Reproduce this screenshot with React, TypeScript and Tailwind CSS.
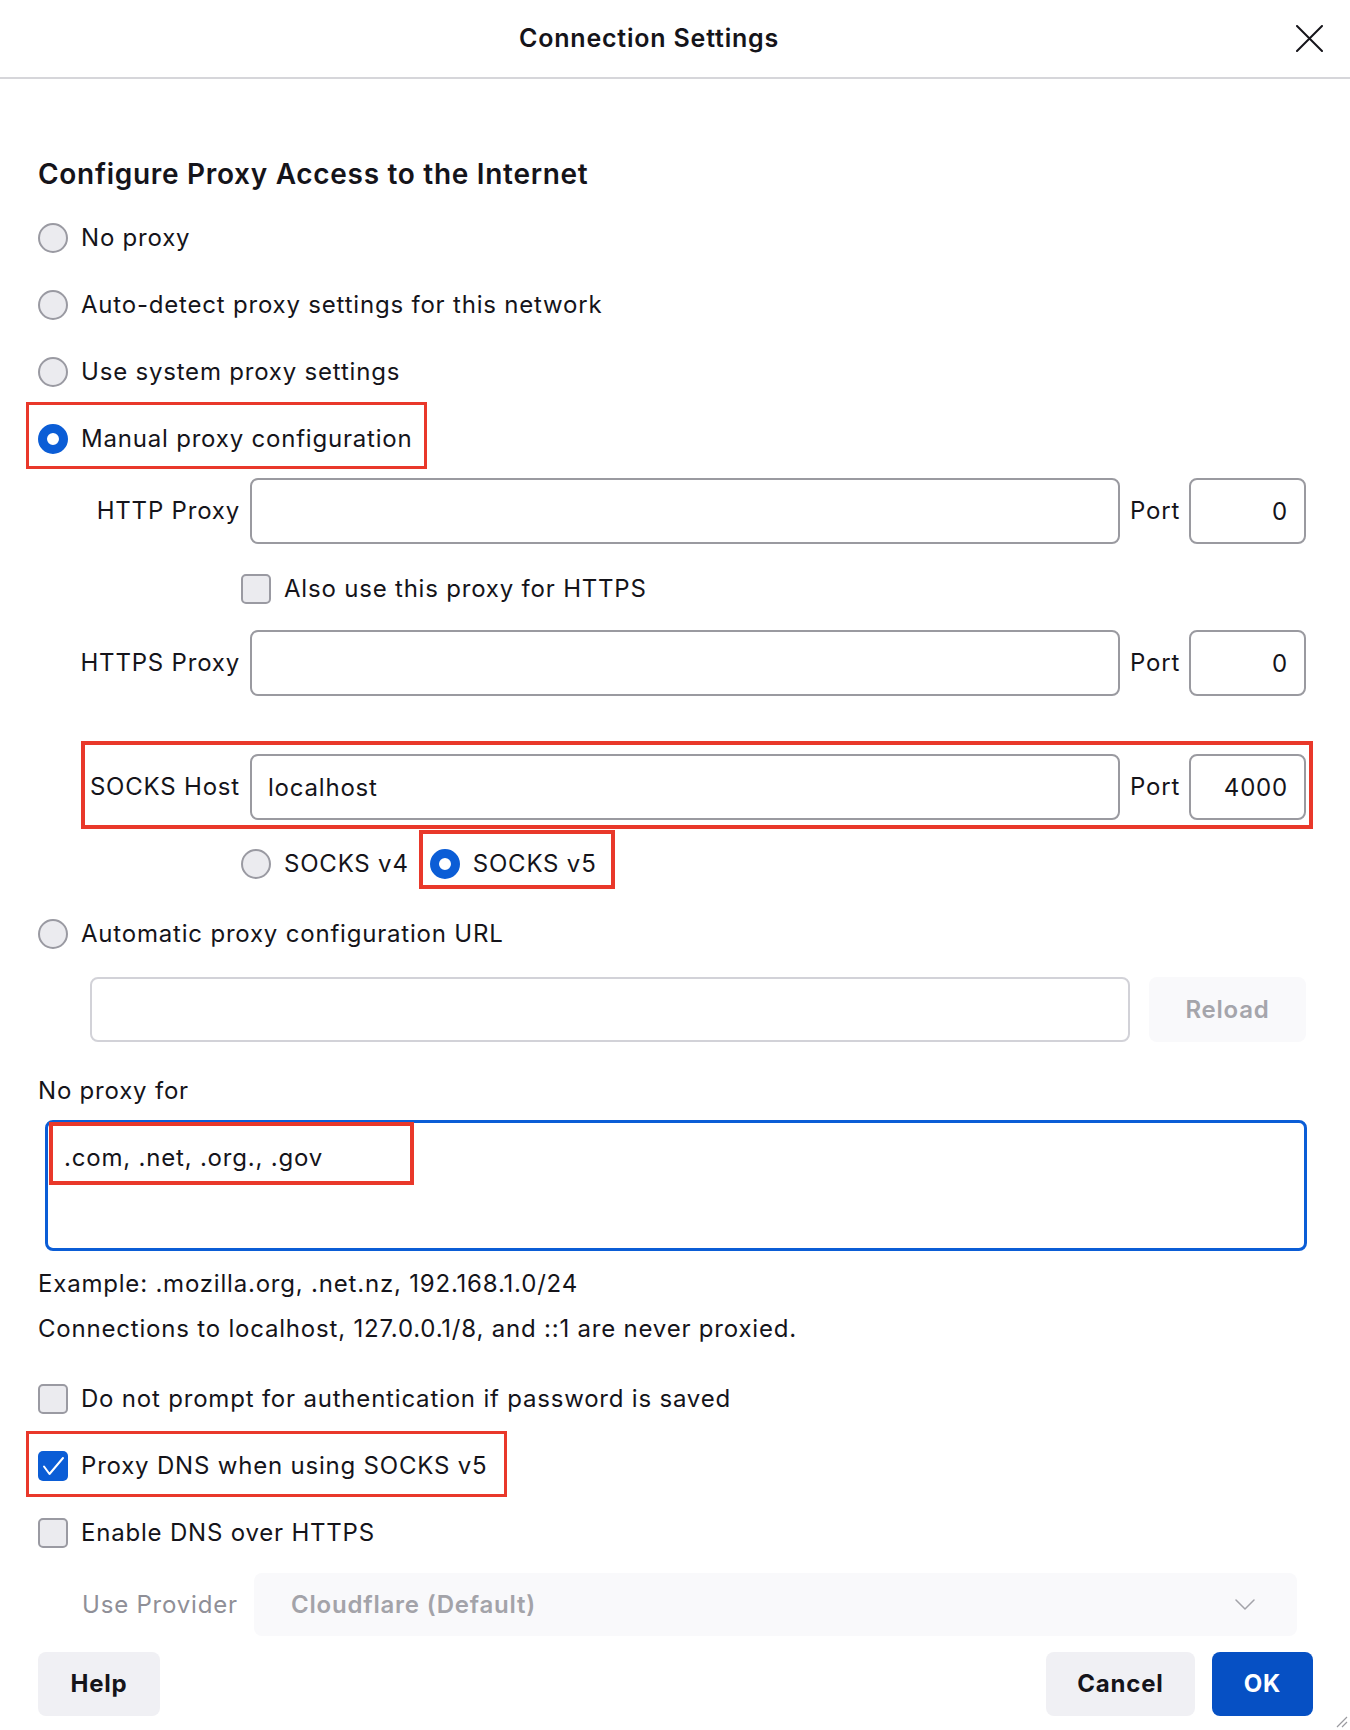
import { useState } from "react";

function Radio({ checked = false }: { checked?: boolean }) {
  if (checked) {
    return <span className="block w-[30px] h-[30px] rounded-full border-[9px] border-[#0b5dd6] bg-white shrink-0" />;
  }
  return <span className="block w-[30px] h-[30px] rounded-full border-2 border-[#9a9aa2] bg-[#ebebef] shrink-0" />;
}

function Checkbox({ checked = false }: { checked?: boolean }) {
  if (checked) {
    return (
      <span className="flex items-center justify-center w-[30px] h-[30px] rounded-[5px] bg-[#0b5dd6] shrink-0">
        <svg width="30" height="30" viewBox="0 0 30 30" fill="none">
          <path d="M6 15.5 L11.5 23 L25 7" stroke="white" strokeWidth="2" strokeLinecap="round" strokeLinejoin="round" />
        </svg>
      </span>
    );
  }
  return <span className="block w-[30px] h-[30px] rounded-[5px] border-2 border-[#9a9aa2] bg-[#ebebef] shrink-0" />;
}

function RadioRow({ label, checked }: { label: string; checked?: boolean }) {
  return (
    <div className="h-[67px] flex items-center gap-[13px]">
      <Radio checked={checked} />
      <span>{label}</span>
    </div>
  );
}

function CheckRow({ label, checked }: { label: string; checked?: boolean }) {
  return (
    <div className="h-[67px] flex items-center gap-[13px]">
      <Checkbox checked={checked} />
      <span>{label}</span>
    </div>
  );
}

function ProxyRow({ label, host = "", port }: { label: string; host?: string; port: string }) {
  return (
    <div className="h-[66px] flex items-center">
      <span className="w-[212px] text-right pr-[10px] shrink-0 whitespace-nowrap">{label}</span>
      <input
        readOnly
        value={host}
        className="w-[870px] h-full rounded-[8px] border-2 border-[#9a9aa0] bg-white px-[16px] outline-none"
      />
      <span className="ml-[10px]">Port</span>
      <input
        readOnly
        value={port}
        className="ml-auto w-[117px] h-full rounded-[8px] border-2 border-[#9a9aa0] bg-white px-[16px] text-right outline-none"
      />
    </div>
  );
}

export default function App() {
  const [noProxy] = useState(".com, .net, .org., .gov");

  return (
    <div className="relative w-[1350px] h-[1730px] bg-white text-[#15141a] font-[family-name:Inter,sans-serif] text-[24px] tracking-[0.8px] overflow-hidden">
      <header className="relative h-[79px] border-b-2 border-[#d6d6da] flex items-center justify-center pr-[52px]">
        <h1 className="text-[25px] tracking-[0.8px] font-semibold">Connection Settings</h1>
        <button className="absolute right-[27px] top-[25px] w-[27px] h-[27px]">
          <svg width="27" height="27" viewBox="0 0 27 27" fill="none">
            <path d="M1 1 L26 26 M26 1 L1 26" stroke="#15141a" strokeWidth="2" strokeLinecap="round" />
          </svg>
        </button>
      </header>

      <main className="ml-[38px] w-[1268px]">
        <h2 className="mt-[75px] h-[40px] flex items-center text-[28px] tracking-[0.7px] font-semibold">
          Configure Proxy Access to the Internet
        </h2>

        <div className="mt-[10px]">
          <RadioRow label="No proxy" />
          <RadioRow label="Auto-detect proxy settings for this network" />
          <RadioRow label="Use system proxy settings" />
          <div className="relative">
            <RadioRow label="Manual proxy configuration" checked />
            <div className="absolute left-[-12px] top-[-3px] w-[401px] h-[67px] border-[3px] border-[#e9382a]" />
          </div>
        </div>

        <div className="mt-[6px]">
          <ProxyRow label="HTTP Proxy" port="0" />
        </div>

        <div className="mt-[12px] h-[65px] pl-[203px] flex items-center gap-[13px]">
          <Checkbox />
          <span>Also use this proxy for HTTPS</span>
        </div>

        <div className="mt-[9px]">
          <ProxyRow label="HTTPS Proxy" port="0" />
        </div>

        <div className="relative mt-[58px]">
          <ProxyRow label="SOCKS Host" host="localhost" port="4000" />
          <div className="absolute left-[43px] top-[-13px] w-[1232px] h-[88px] border-[4px] border-[#e9382a]" />
        </div>

        <div className="relative mt-[11px] h-[65px] pl-[203px] flex items-center">
          <Radio />
          <span className="ml-[13px]">SOCKS v4</span>
          <span className="ml-[21px]">
            <Radio checked />
          </span>
          <span className="ml-[13px]">SOCKS v5</span>
          <div className="absolute left-[381px] top-[-1px] w-[196px] h-[59px] border-[4px] border-[#e9382a]" />
        </div>

        <div className="mt-[4px]">
          <RadioRow label="Automatic proxy configuration URL" />
        </div>

        <div className="mt-[10px] h-[65px] pl-[52px] flex">
          <input
            readOnly
            value=""
            className="w-[1040px] h-full rounded-[8px] border-2 border-[#d2d2d8] bg-white px-[16px] outline-none"
          />
          <button className="ml-auto w-[157px] h-full rounded-[8px] bg-[#f9f9fb] text-[#a5a5ab] font-semibold">
            Reload
          </button>
        </div>

        <div className="mt-[28px] h-[42px] flex items-center">No proxy for</div>

        <div className="relative mt-[8px] ml-[7px] w-[1262px] h-[131px]">
          <textarea
            readOnly
            value={noProxy}
            className="w-full h-full rounded-[8px] border-[3px] border-[#0b5dd6] px-[16px] pt-[19px] leading-[32px] resize-none outline-none"
          />
          <div className="absolute left-[4px] top-[2px] w-[365px] h-[63px] border-[4px] border-[#e9382a]" />
        </div>

        <div className="mt-[12px] h-[41px] flex items-center">Example: .mozilla.org, .net.nz, 192.168.1.0/24</div>
        <div className="mt-[4px] h-[42px] flex items-center">
          Connections to localhost, 127.0.0.1/8, and ::1 are never proxied.
        </div>

        <div className="mt-[15px]">
          <CheckRow label="Do not prompt for authentication if password is saved" />
          <div className="relative">
            <CheckRow label="Proxy DNS when using SOCKS v5" checked />
            <div className="absolute left-[-12px] top-[-1px] w-[481px] h-[66px] border-[3px] border-[#e9382a]" />
          </div>
          <CheckRow label="Enable DNS over HTTPS" />
        </div>

        <div className="mt-[7px] h-[63px] flex items-center">
          <span className="w-[216px] pl-[44px] shrink-0 whitespace-nowrap text-[#8f8f97]">Use Provider</span>
          <div className="w-[1043px] h-full rounded-[8px] bg-[#f9f9fb] flex items-center pl-[37px] pr-[42px] text-[#a3a3a9] font-semibold">
            <span>Cloudflare (Default)</span>
            <svg className="ml-auto" width="20" height="12" viewBox="0 0 20 12" fill="none">
              <path d="M1 1 L10 10 L19 1" stroke="#a3a3a9" strokeWidth="1.5" strokeLinecap="round" strokeLinejoin="round" />
            </svg>
          </div>
        </div>

        <div className="mt-[16px] h-[64px] flex w-[1275px]">
          <button className="w-[122px] h-full rounded-[8px] bg-[#f0f0f4] font-bold">Help</button>
          <button className="ml-auto w-[149px] h-full rounded-[8px] bg-[#f0f0f4] font-bold">Cancel</button>
          <button className="ml-[17px] w-[101px] h-full rounded-[8px] bg-[#0650c4] text-white font-bold">OK</button>
        </div>
      </main>

      <svg className="absolute right-[2px] bottom-[2px]" width="14" height="14" viewBox="0 0 14 14" fill="none">
        <path d="M13 3 L3 13 M13 8 L8 13" stroke="#9a9aa0" strokeWidth="1.2" />
      </svg>
    </div>
  );
}
